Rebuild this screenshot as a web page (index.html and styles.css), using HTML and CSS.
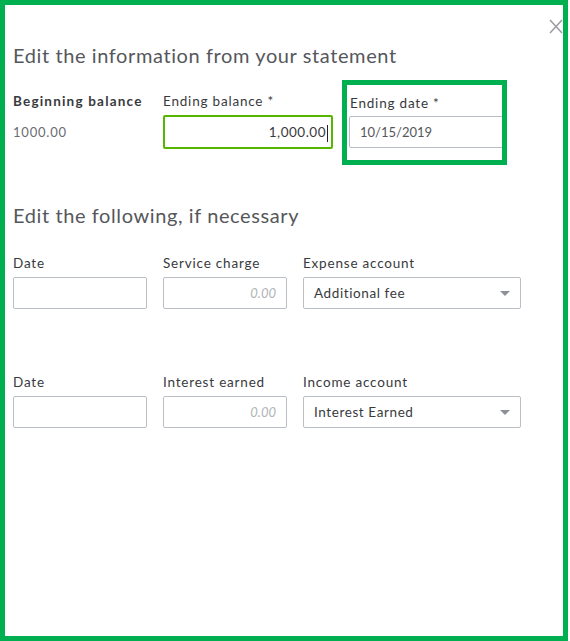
FILE: index.html
```html
<!DOCTYPE html>
<html>
<head>
    <meta charset="UTF-8">
    <link rel="stylesheet" href="styles.css">
</head>
<body>
    <div class="dialog">
        <div class="top-bar">
            <span class="close">
                <svg width="14" height="15" viewBox="0 0 14 15"><path d="M1 1 L13 14 M13 1 L1 14" stroke="#9a9ca1" stroke-width="1.5" fill="none"/></svg>
            </span>
        </div>

        <h2 class="heading">Edit the information from your statement</h2>

        <div class="statement-row">
            <div class="field begin-col">
                <div class="label bold">Beginning balance</div>
                <div class="value">1000.00</div>
            </div>
            <div class="field balance-col">
                <div class="label">Ending balance *</div>
                <div class="text-input focused">1,000.00<span class="cursor"></span></div>
            </div>
            <div class="highlight">
                <div class="label">Ending date *</div>
                <div class="text-input date-input">10/15/2019</div>
            </div>
        </div>

        <h2 class="heading second">Edit the following, if necessary</h2>

        <div class="extra-row">
            <div class="field col-date">
                <div class="label">Date</div>
                <div class="text-input"></div>
            </div>
            <div class="field col-amount">
                <div class="label">Service charge</div>
                <div class="text-input amount">0.00</div>
            </div>
            <div class="field col-account">
                <div class="label">Expense account</div>
                <div class="text-input select">Additional fee<span class="caret"></span></div>
            </div>
        </div>

        <div class="extra-row lower">
            <div class="field col-date">
                <div class="label">Date</div>
                <div class="text-input"></div>
            </div>
            <div class="field col-amount">
                <div class="label">Interest earned</div>
                <div class="text-input amount">0.00</div>
            </div>
            <div class="field col-account">
                <div class="label">Income account</div>
                <div class="text-input select">Interest Earned<span class="caret"></span></div>
            </div>
        </div>
    </div>
</body>
</html>
```

FILE: styles.css
```css
body {
    margin: 0;
    font-family: Lato, "Open Sans", sans-serif;
    color: #393a3d;
    background: white;
}
.dialog {
    box-sizing: border-box;
    width: 568px;
    height: 641px;
    border: 5px solid #00b050;
    padding: 0 0 0 8px;
    overflow: hidden;
}
.top-bar {
    display: flex;
    justify-content: flex-end;
    height: 28px;
    padding-top: 13px;
    box-sizing: border-box;
}
.close {
    width: 14px;
    height: 15px;
}
.heading {
    margin: 10px 0 0 0;
    font-size: 20px;
    line-height: 24px;
    letter-spacing: 0.6px;
    font-weight: normal;
    color: #55575c;
}
.heading.second {
    margin-top: 38px;
}
.statement-row {
    display: flex;
    align-items: flex-start;
    margin-top: 13px;
}
.label {
    font-size: 13.5px;
    line-height: 16px;
    height: 16px;
    letter-spacing: 0.8px;
    white-space: nowrap;
    color: #393a3d;
}
.label.bold {
    font-weight: bold;
    letter-spacing: 1.2px;
}
.field {
    display: flex;
    flex-direction: column;
}
.begin-col {
    width: 150px;
    margin-top: 13px;
}
.value {
    margin-top: 6px;
    height: 34px;
    line-height: 34px;
    font-size: 13px;
    letter-spacing: 0.8px;
    color: #6b6c72;
}
.balance-col {
    width: 170px;
    margin-top: 13px;
}
.text-input {
    box-sizing: border-box;
    height: 32px;
    margin-top: 6px;
    border: 1px solid #babec5;
    border-radius: 2px;
    font-size: 13px;
    line-height: 30px;
    padding: 0 10px;
    color: #393a3d;
    white-space: nowrap;
}
.text-input.focused {
    height: 34px;
    border: 2px solid #53b700;
    text-align: right;
    padding: 0 3px 0 10px;
    line-height: 30px;
    font-size: 13.5px;
    letter-spacing: 0.5px;
}
.cursor {
    display: inline-block;
    width: 1px;
    height: 17px;
    background: #222;
    vertical-align: middle;
    margin-left: 1px;
}
.highlight {
    box-sizing: border-box;
    width: 165px;
    height: 85px;
    margin-left: 9px;
    border: 5px solid #00b050;
    padding: 10px 0 0 2px;
    overflow: hidden;
}
.highlight .label {
    padding-left: 1px;
}
.date-input {
    width: 170px;
    margin-top: 5px;
    color: #55575c;
}
.extra-row {
    display: flex;
    gap: 16px;
    margin-top: 28px;
}
.extra-row.lower {
    margin-top: 65px;
}
.col-date {
    width: 134px;
}
.col-amount {
    width: 124px;
}
.col-account {
    width: 218px;
}
.amount {
    text-align: right;
    font-style: italic;
    color: #b0b3b8;
}
.select {
    display: flex;
    justify-content: space-between;
    align-items: center;
    font-size: 13.5px;
    letter-spacing: 0.6px;
    padding-right: 10px;
}
.caret {
    width: 0;
    height: 0;
    border-left: 5px solid transparent;
    border-right: 5px solid transparent;
    border-top: 5px solid #8d9096;
}
```
